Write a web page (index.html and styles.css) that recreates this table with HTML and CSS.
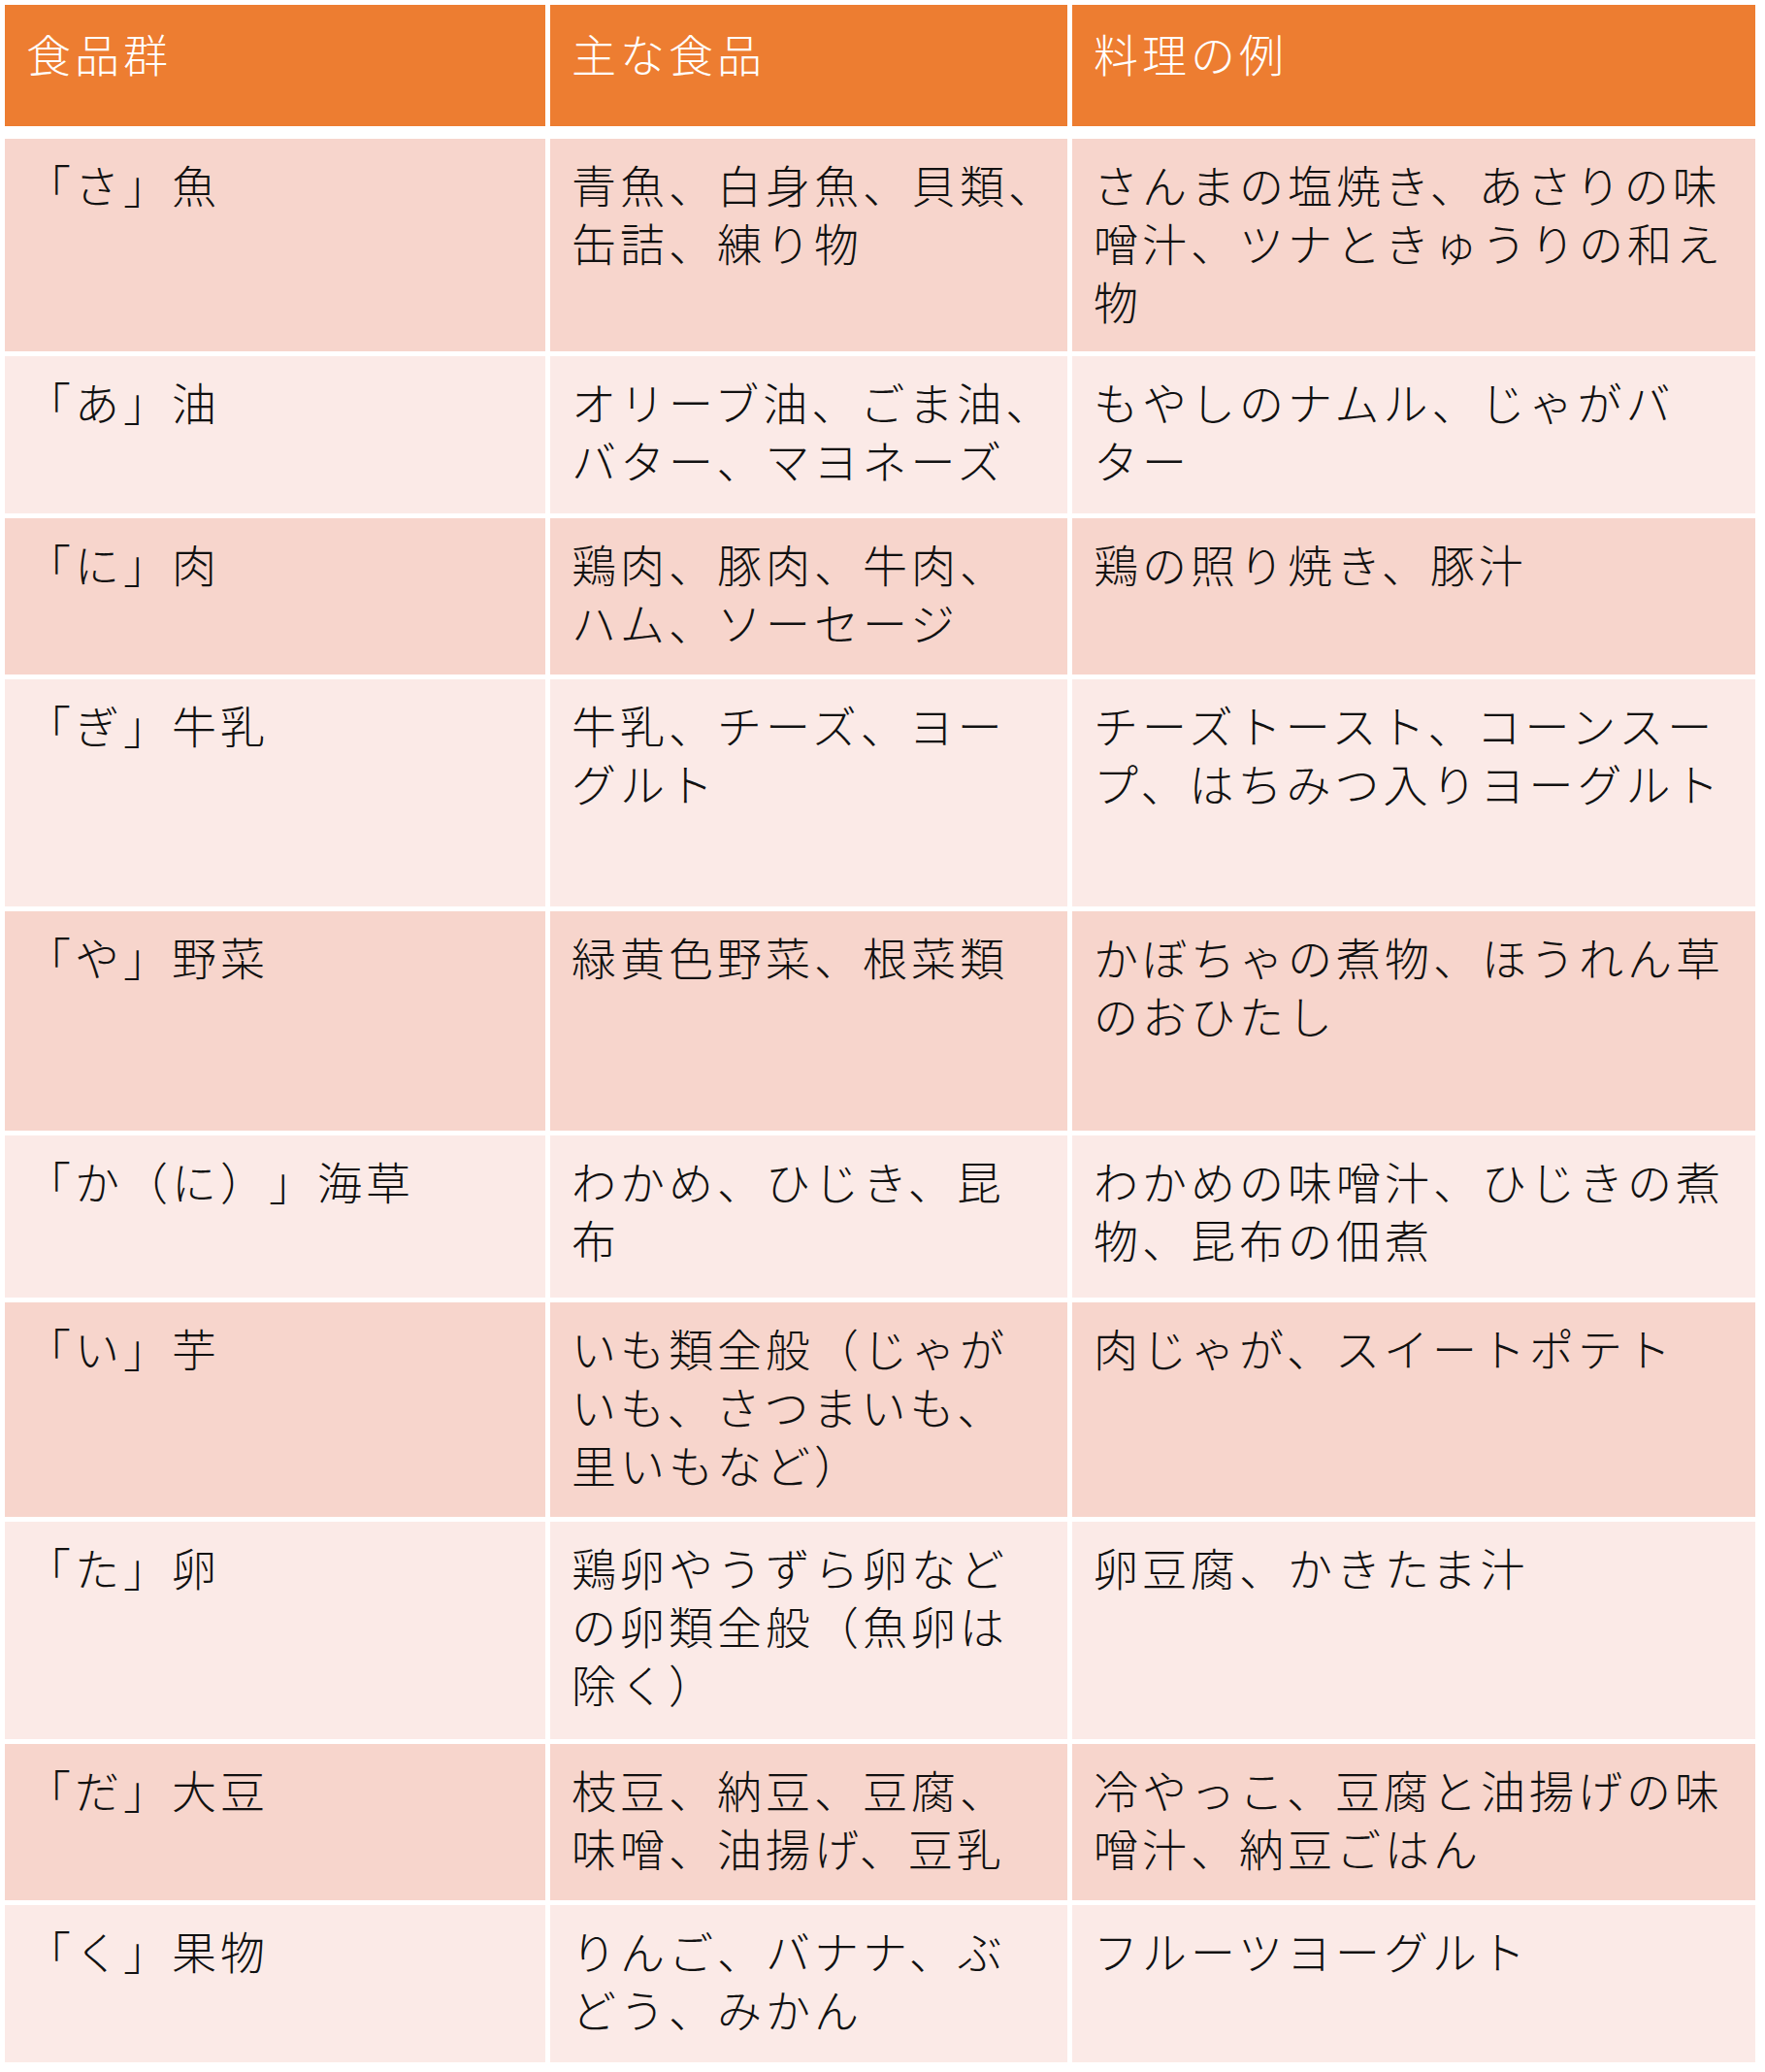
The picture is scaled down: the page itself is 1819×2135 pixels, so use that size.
FILE: index.html
```html
<!DOCTYPE html>
<html lang="ja">
<head>
<meta charset="utf-8">
<title>食品群</title>
<link rel="stylesheet" href="styles.css">
</head>
<body>
<div class="table">
  <div class="row head">
    <div class="cell">食品群</div>
    <div class="cell">主な食品</div>
    <div class="cell">料理の例</div>
  </div>
  <div class="row odd h219">
    <div class="cell">「さ」魚</div>
    <div class="cell">青魚、白身魚、貝類、<br>缶詰、練り物</div>
    <div class="cell">さんまの塩焼き、あさりの味<br>噌汁、ツナときゅうりの和え<br>物</div>
  </div>
  <div class="row even h162">
    <div class="cell">「あ」油</div>
    <div class="cell">オリーブ油、ごま油、<br>バター、マヨネーズ</div>
    <div class="cell">もやしのナムル、じゃがバ<br>ター</div>
  </div>
  <div class="row odd h161">
    <div class="cell">「に」肉</div>
    <div class="cell">鶏肉、豚肉、牛肉、<br>ハム、ソーセージ</div>
    <div class="cell">鶏の照り焼き、豚汁</div>
  </div>
  <div class="row even h234">
    <div class="cell">「ぎ」牛乳</div>
    <div class="cell">牛乳、チーズ、ヨー<br>グルト</div>
    <div class="cell">チーズトースト、コーンスー<br>プ、はちみつ入りヨーグルト</div>
  </div>
  <div class="row odd h226">
    <div class="cell">「や」野菜</div>
    <div class="cell">緑黄色野菜、根菜類</div>
    <div class="cell">かぼちゃの煮物、ほうれん草<br>のおひたし</div>
  </div>
  <div class="row even h167">
    <div class="cell">「か（に）」海草</div>
    <div class="cell">わかめ、ひじき、昆<br>布</div>
    <div class="cell">わかめの味噌汁、ひじきの煮<br>物、昆布の佃煮</div>
  </div>
  <div class="row odd h221">
    <div class="cell">「い」芋</div>
    <div class="cell">いも類全般（じゃが<br>いも、さつまいも、<br>里いもなど）</div>
    <div class="cell">肉じゃが、スイートポテト</div>
  </div>
  <div class="row even h224">
    <div class="cell">「た」卵</div>
    <div class="cell">鶏卵やうずら卵など<br>の卵類全般（魚卵は<br>除く）</div>
    <div class="cell">卵豆腐、かきたま汁</div>
  </div>
  <div class="row odd h161">
    <div class="cell">「だ」大豆</div>
    <div class="cell">枝豆、納豆、豆腐、<br>味噌、油揚げ、豆乳</div>
    <div class="cell">冷やっこ、豆腐と油揚げの味<br>噌汁、納豆ごはん</div>
  </div>
  <div class="row even h162">
    <div class="cell">「く」果物</div>
    <div class="cell">りんご、バナナ、ぶ<br>どう、みかん</div>
    <div class="cell">フルーツヨーグルト</div>
  </div>
</div>
</body>
</html>
```

FILE: styles.css
```css
html, body {
  margin: 0;
  padding: 0;
  background: #ffffff;
}

body {
  font-family: "Noto Sans CJK JP", "Noto Sans", sans-serif;
  font-weight: 300;
  color: #111111;
}

.table {
  display: flex;
  flex-direction: column;
  gap: 5px;
  padding: 5px 0 0 5px;
  width: 1804px;
}

.row {
  display: grid;
  grid-template-columns: 557px 533px 704px;
  column-gap: 5px;
}

.cell {
  padding: 16px 8px 0 22px;
  font-size: 46px;
  line-height: 60px;
  letter-spacing: 4px;
  white-space: nowrap;
  text-spacing-trim: space-all;
}

.head {
  height: 125px;
  margin-bottom: 8px;
}

.head .cell {
  background: #ed7d31;
  color: #ffffff;
  padding-top: 19px;
}

.odd .cell {
  background: #f7d5cc;
}

.even .cell {
  background: #fbeae7;
}

.h161 { height: 161px; }
.h162 { height: 162px; }
.h167 { height: 167px; }
.h219 { height: 219px; }
.h221 { height: 221px; }
.h224 { height: 224px; }
.h226 { height: 226px; }
.h234 { height: 234px; }
```
